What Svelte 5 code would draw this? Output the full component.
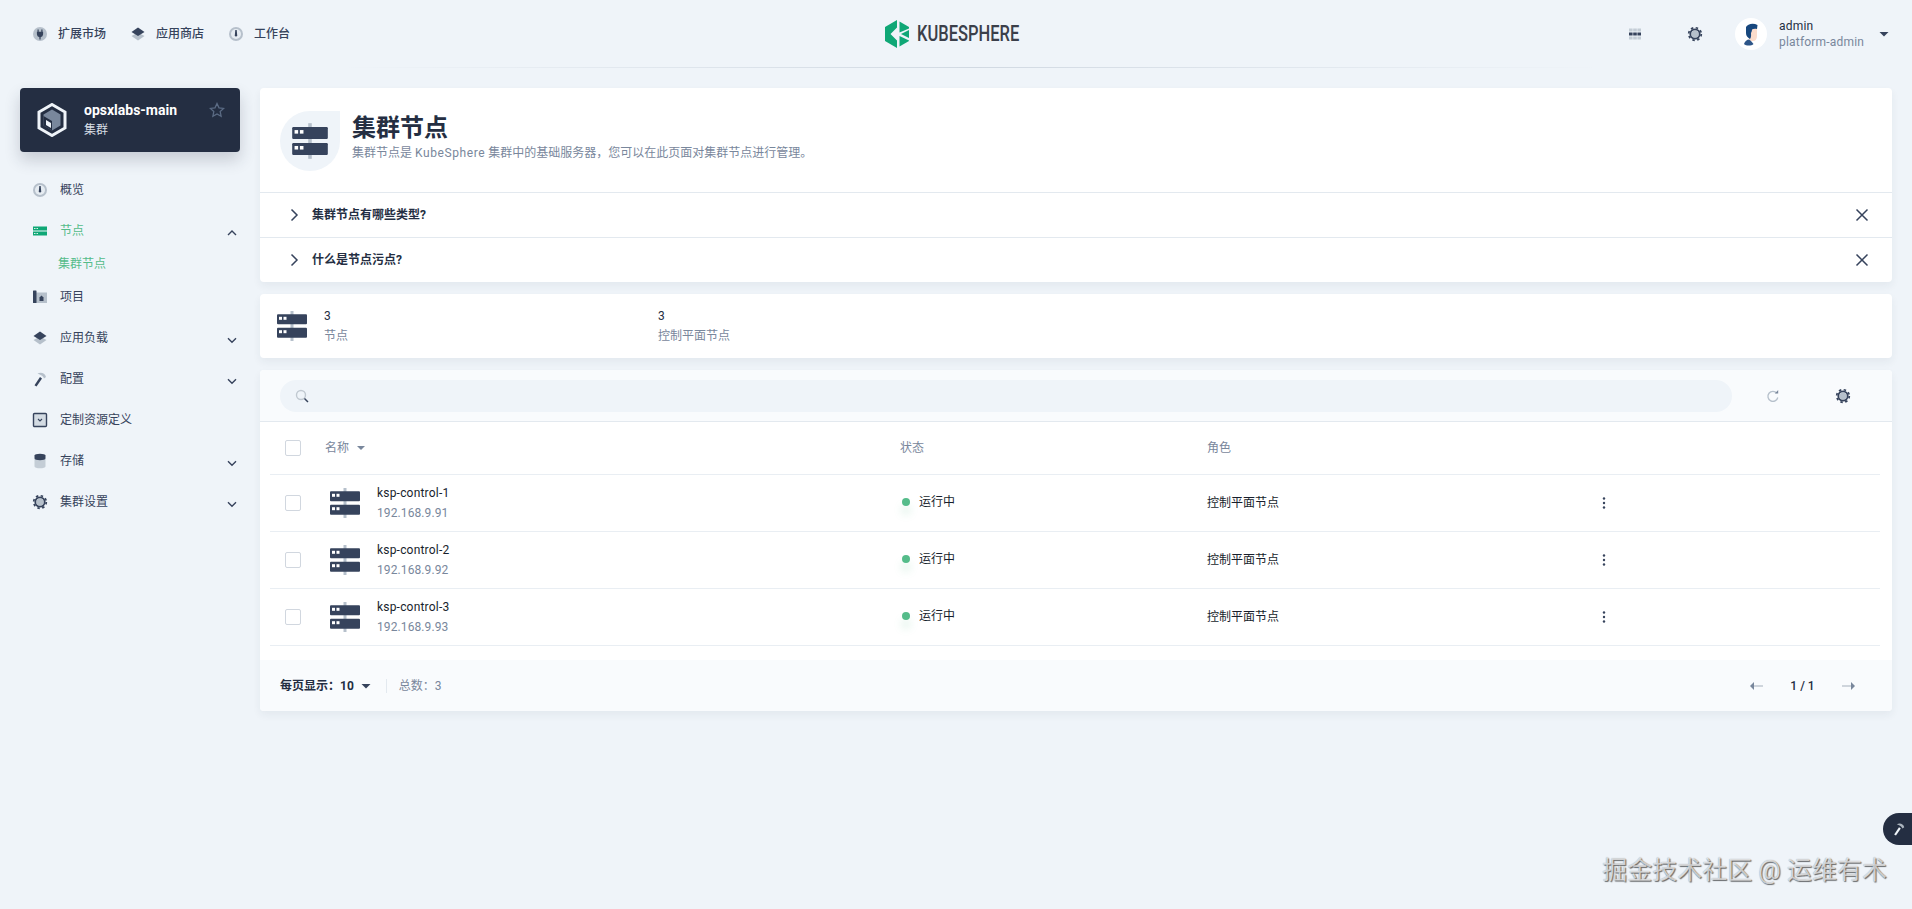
<script>
  const topLinks = [
    { icon: 'plug', label: '扩展市场' },
    { icon: 'layers', label: '应用商店' },
    { icon: 'gauge', label: '工作台' }
  ];

  const navItems = [
    { icon: 'gauge', label: '概览' },
    { icon: 'server', label: '节点', open: true, active: true, children: ['集群节点'] },
    { icon: 'project', label: '项目' },
    { icon: 'layers', label: '应用负载', closed: true },
    { icon: 'hammer', label: '配置', closed: true },
    { icon: 'crd', label: '定制资源定义' },
    { icon: 'storage', label: '存储', closed: true },
    { icon: 'gear', label: '集群设置', closed: true }
  ];

  const tips = ['集群节点有哪些类型?', '什么是节点污点?'];

  const nodes = [
    { name: 'ksp-control-1', ip: '192.168.9.91' },
    { name: 'ksp-control-2', ip: '192.168.9.92' },
    { name: 'ksp-control-3', ip: '192.168.9.93' }
  ];
</script>

{#snippet serverIcon(cls, dark = '#36435c', light = '#b6c0cb', dot = '#fff')}
  <svg class={cls} viewBox="0 0 32 32">
    <rect x="14.5" y="1" width="3" height="30" fill={light} />
    <rect x="1" y="4.3" width="30" height="10" rx="1" fill={dark} />
    <rect x="1" y="17.7" width="30" height="10" rx="1" fill={dark} />
    <rect x="3" y="6.8" width="3" height="3" fill={dot} />
    <rect x="7.5" y="6.8" width="3" height="3" fill={dot} />
    <rect x="3" y="20.2" width="3" height="3" fill={dot} />
    <rect x="7.5" y="20.2" width="3" height="3" fill={dot} />
  </svg>
{/snippet}

{#snippet icon(name)}
  <svg class="ico" viewBox="0 0 16 16">
    {#if name === 'gauge'}
      <circle cx="8" cy="8" r="7" fill="#b6c0cb" />
      <circle cx="8" cy="8" r="5" fill="#e6ecf2" />
      <path d="M7.3 4h1.4l.5 5.2a1.2 1.2 0 1 1-2.4 0z" fill="#36435c" />
    {:else if name === 'plug'}
      <circle cx="8" cy="8" r="7" fill="#b6c0cb" />
      <path d="M5.5 3.5h1.2v2.2h2.6V3.5h1.2v2.2h.6v2.6a3 3 0 0 1-2.5 2.9v2.3H7.4v-2.3a3 3 0 0 1-2.5-2.9V5.700h.6z" fill="#36435c" />
    {:else if name === 'layers'}
      <path d="M1.500 10l6.500-3.500 6.500 3.500-6.500 4.500z" fill="#b6c0cb" />
      <path d="M1.500 6l6.500-4.500 6.500 4.500-6.500 4z" fill="#36435c" />
    {:else if name === 'project'}
      <rect x="3" y="3.500" width="12" height="10.500" fill="#b6c0cb" />
      <rect x="1" y="1.500" width="3.500" height="12.500" rx=".5" fill="#36435c" />
      <path d="M7.500 12V8.500l2-2 2 2V12z" fill="#36435c" />
    {:else if name === 'hammer'}
      <path d="M8 6l2 1.500-5.500 8-2-1.200z" fill="#36435c" />
      <path d="M5.500 2.500c3.500-1.500 7.500-.500 8.500 3.500l-2 1.500c-.500-2-2.500-3.500-6.500-5z" fill="#b6c0cb" />
    {:else if name === 'crd'}
      <rect x="1.500" y="1.500" width="13" height="13" rx="1" fill="#d3dbe3" stroke="#36435c" stroke-width="1.400" />
      <path d="M6 7l2 2 2-2" fill="none" stroke="#36435c" stroke-width="1.100" />
    {:else if name === 'storage'}
      <path d="M2.500 6h11v7.500c0 1-2.500 1.800-5.500 1.800s-5.500-.8-5.500-1.800z" fill="#c4cdd6" />
      <path d="M2.500 2.500C2.500 1.500 5 .8 8 .8s5.500.7 5.500 1.700v3C13.500 6.500 11 7.200 8 7.200S2.500 6.500 2.500 5.500z" fill="#36435c" />
    {:else if name === 'gear'}
      <circle cx="8" cy="8" r="3.600" fill="#b6c0cb" />
      <circle cx="8" cy="8" r="4.700" fill="none" stroke="#36435c" stroke-width="1.800" />
      <circle cx="8" cy="8" r="6.300" fill="none" stroke="#36435c" stroke-width="1.700" stroke-dasharray="2.470 2.470" />
    {:else if name === 'grid'}
      <g fill="#c4cdd6">
        <rect x="2" y="2.500" width="3.600" height="3" /><rect x="6.200" y="2.500" width="3.600" height="3" /><rect x="10.400" y="2.500" width="3.600" height="3" />
        <rect x="2" y="10.500" width="3.600" height="3" /><rect x="6.200" y="10.500" width="3.600" height="3" /><rect x="10.400" y="10.500" width="3.600" height="3" />
      </g>
      <g fill="#36435c">
        <rect x="2" y="6.500" width="3.600" height="3" /><rect x="6.200" y="6.500" width="3.600" height="3" /><rect x="10.400" y="6.500" width="3.600" height="3" />
      </g>
    {:else if name === 'search'}
      <circle cx="7" cy="7" r="4.500" fill="none" stroke="#c1c9d1" stroke-width="1.400" />
      <path d="M10.500 10.500l3.500 3.500" stroke="#36435c" stroke-width="1.500" />
    {:else if name === 'refresh'}
      <path d="M11.800 5.200A5 5 0 1 0 12.800 9.500" fill="none" stroke="#b6c0cb" stroke-width="1.300" />
      <path d="M9.800 5.400h3.400V2z" fill="#79879c" />
    {:else if name === 'down'}
      <path d="M4 6.200l4 4 4-4" fill="none" stroke="#36435c" stroke-width="1.400" />
    {:else if name === 'up'}
      <path d="M4 10l4-4 4 4" fill="none" stroke="#36435c" stroke-width="1.400" />
    {:else if name === 'right'}
      <path d="M5.500 2.500l5.500 5.500-5.500 5.500" fill="none" stroke="#36435c" stroke-width="1.500" />
    {:else if name === 'close'}
      <path d="M2.500 2.500l11 11M13.500 2.500l-11 11" fill="none" stroke="#36435c" stroke-width="1.500" />
    {:else if name === 'caret'}
      <path d="M3.500 6h9L8 10.500z" fill="#36435c" />
    {:else if name === 'caretGray'}
      <path d="M4 6h8L8 10z" fill="#79879c" />
    {:else if name === 'dots'}
      <g fill="#36435c"><circle cx="8" cy="3.500" r="1.200" /><circle cx="8" cy="8" r="1.200" /><circle cx="8" cy="12.500" r="1.200" /></g>
    {:else if name === 'left'}
      <path d="M5 8h10" stroke="#c1c9d1" stroke-width="1.500" />
      <path d="M6 4L2 8l4 4z" fill="#79879c" />
    {:else if name === 'next'}
      <path d="M1 8h10" stroke="#c1c9d1" stroke-width="1.500" />
      <path d="M10 4l4 4-4 4z" fill="#79879c" />
    {/if}
  </svg>
{/snippet}

<div class="page">
  <header class="topbar">
    <div class="top-links">
      {#each topLinks as link}
        <a class="top-link" href="#top">{@render icon(link.icon)}<span>{link.label}</span></a>
      {/each}
    </div>

    <div class="logo">
      <svg class="logo-mark" viewBox="0 0 24 28">
        <g fill="#0fa776">
          <path d="M0 7L12 0v7.500L5.500 14l6.500 6.500V28L0 21z" />
          <path d="M14.500 1.500L24 7v1.500l-9.500 4z" />
          <path d="M24 10v8l-8-4z" />
          <path d="M14.500 16l9.500 4.500V21l-9.500 5.500z" />
        </g>
      </svg>
      <span class="logo-text">KUBESPHERE</span>
    </div>

    <div class="top-right">
      {@render icon('grid')}
      {@render icon('gear')}
      <div class="avatar">
        <svg viewBox="0 0 32 32" width="32" height="32">
          <path d="M14 10h8v8c0 3-1.500 5-4 5h-4z" fill="#fbdccb" />
          <path d="M9 26c1-3 3-4.500 5-4.500l2 1.500 2.500 3c-2 2-7.500 2-9.500 0z" fill="#2d5588" />
          <path d="M11 9c1.500-3 7-4.500 11.500-2l-.5 4c-2.500-.5-4 0-5 .5 0 1.500-.5 2.500-1 3.500 0 2 .5 4-1 6-2.500-1.500-4-3-4-6 0-2 0-4 0-6z" fill="#17477d" />
        </svg>
      </div>
      <div class="user">
        <div class="user-name">admin</div>
        <div class="user-role">platform-admin</div>
      </div>
      {@render icon('caret')}
    </div>
    <div class="top-line"></div>
  </header>

  <div class="body">
    <aside class="sidebar">
      <div class="cluster">
        <svg class="cluster-logo" viewBox="0 0 30 34">
          <path d="M15 1.500L28 9v16l-13 7.500L2 25V9z" fill="#242e42" stroke="#eff4f9" stroke-width="3" />
          <path d="M15 6.500L23.500 11.500v11L15 27.500 6.500 22.500v-11z" fill="#79879c" />
          <path d="M6.500 13l8.500 5v9.500l-8.500-5z" fill="#242e42" />
          <path d="M9 17l5 3v5l-5-3z" fill="#eff4f9" />
        </svg>
        <div class="cluster-text">
          <div class="cluster-name">opsxlabs-main</div>
          <div class="cluster-kind">集群</div>
        </div>
        <svg class="star" viewBox="0 0 16 16">
          <path d="M8 1.500l2 4.300 4.700.6-3.500 3.200.9 4.700L8 12l-4.100 2.300.9-4.700L1.300 6.400 6 5.800z" fill="none" stroke="#5b6b84" stroke-width="1.300" />
        </svg>
      </div>

      <nav class="nav">
        {#each navItems as item}
          <div class="nav-item" class:active={item.active}>
            {#if item.active}
              <svg class="ico" viewBox="0 0 16 16">
                <path d="M1 3.500h14v4H1zM1 8.500h14v4H1z" fill="#0fa776" />
                <path d="M2 5h1.500v1H2zM4.500 5H6v1H4.500zM2 10h1.500v1H2zM4.500 10H6v1H4.500z" fill="#d8f0e6" />
              </svg>
            {:else}
              {@render icon(item.icon)}
            {/if}
            <span class="nav-label">{item.label}</span>
            {#if item.open}
              <span class="nav-chevron">{@render icon('up')}</span>
            {:else if item.closed}
              <span class="nav-chevron">{@render icon('down')}</span>
            {/if}
          </div>
          {#each item.children ?? [] as child}
            <div class="nav-child">{child}</div>
          {/each}
        {/each}
      </nav>
    </aside>

    <main class="main">
      <section class="card">
        <div class="hero">
          <div class="hero-icon">{@render serverIcon('hero-server')}</div>
          <div class="hero-text">
            <h1>集群节点</h1>
            <p>集群节点是 <span class="latin">KubeSphere</span> 集群中的基础服务器&#xFF0C;您可以在此页面对集群节点进行管理。</p>
          </div>
        </div>
        {#each tips as tip}
          <div class="tip">
            {@render icon('right')}
            <span class="tip-text">{tip}</span>
            {@render icon('close')}
          </div>
        {/each}
      </section>

      <section class="card stats">
        {@render serverIcon('server')}
        <div class="stat">
          <div class="stat-value">3</div>
          <div class="stat-label">节点</div>
        </div>
        <div class="stat">
          <div class="stat-value">3</div>
          <div class="stat-label">控制平面节点</div>
        </div>
      </section>

      <section class="card table-card">
        <div class="toolbar">
          <div class="search">{@render icon('search')}</div>
          <div class="tools">
            {@render icon('refresh')}
            {@render icon('gear')}
          </div>
        </div>

        <div class="table">
          <div class="tr thead">
            <span class="checkbox"></span>
            <span class="th-name">名称 {@render icon('caretGray')}</span>
            <span>状态</span>
            <span>角色</span>
            <span></span>
          </div>
          {#each nodes as node}
            <div class="tr">
              <span class="checkbox"></span>
              <div class="node">
                {@render serverIcon('server')}
                <div>
                  <div class="node-name">{node.name}</div>
                  <div class="node-ip">{node.ip}</div>
                </div>
              </div>
              <div class="status"><i class="dot"></i>运行中</div>
              <div class="role">控制平面节点</div>
              <div class="more">{@render icon('dots')}</div>
            </div>
          {/each}
        </div>

        <div class="footer">
          <span class="page-size">每页显示&#xFF1A;10</span>
          {@render icon('caret')}
          <span class="sep"></span>
          <span class="total">总数&#xFF1A;3</span>
          <div class="pager">
            {@render icon('left')}
            <span class="page-num">1 / 1</span>
            {@render icon('next')}
          </div>
        </div>
      </section>
    </main>
  </div>

  <div class="tool-tab">
    <svg viewBox="0 0 16 16" width="14" height="14">
      <path d="M8 6l2 1.500-5.500 8-2-1.200z" fill="#eff4f9" />
      <path d="M5.500 2.500c3.500-1.500 7.500-.500 8.500 3.500l-2 1.500c-.500-2-2.500-3.500-6.500-5z" fill="#abb4be" />
    </svg>
  </div>
  <div class="watermark">掘金技术社区 @ 运维有术</div>
</div>

<style>
  :global(body) {
    margin: 0;
    background: #eff4f9;
    color: #242e42;
    font-family: Roboto, 'Noto Sans CJK SC', sans-serif;
    font-size: 12px;
    line-height: 20px;
    overflow: hidden;
  }

  .page {
    position: relative;
    height: 909px;
    overflow: hidden;
  }

  .ico {
    width: 16px;
    height: 16px;
    flex: none;
    display: block;
  }

  /* top bar */
  .topbar {
    position: relative;
    height: 68px;
    display: grid;
    grid-template-columns: 1fr auto 1fr;
    align-items: center;
  }

  .top-line {
    position: absolute;
    left: 340px;
    right: 310px;
    bottom: 0;
    height: 1px;
    background: linear-gradient(90deg, rgba(201, 209, 219, 0), #d1d9e2 50%, rgba(201, 209, 219, 0));
  }

  .top-links {
    display: flex;
    gap: 24px;
    padding-left: 32px;
  }

  .top-link {
    display: flex;
    align-items: center;
    gap: 10px;
    color: #36435c;
    font-weight: 500;
    text-decoration: none;
  }

  .logo {
    display: flex;
    align-items: center;
    gap: 8px;
    width: 135px;
    margin-right: 7px;
  }

  .logo-mark {
    width: 24px;
    height: 28px;
    flex: none;
  }

  .logo-text {
    font-size: 22px;
    line-height: 28px;
    color: #3b3f4a;
    font-weight: 500;
    transform: scaleX(0.75);
    transform-origin: left center;
    white-space: nowrap;
  }

  .top-right {
    display: flex;
    align-items: center;
    justify-content: flex-end;
    padding-right: 20px;
    gap: 44px;
  }

  .avatar {
    width: 32px;
    height: 32px;
    border-radius: 50%;
    background: #fff;
    margin-left: -12px;
    margin-right: -32px;
  }

  .user {
    width: 97px;
    margin-right: -44px;
    line-height: 16px;
    letter-spacing: 0.2px;
  }

  .user-role {
    color: #79879c;
  }

  /* layout */
  .body {
    display: flex;
    padding-top: 20px;
  }

  .sidebar {
    width: 220px;
    margin: 0 20px;
    flex: none;
  }

  .cluster {
    height: 64px;
    box-sizing: border-box;
    display: flex;
    align-items: center;
    padding-left: 17px;
    background: #242e42;
    border-radius: 4px;
    box-shadow: 0 8px 16px rgba(36, 46, 66, 0.2);
    color: #fff;
  }

  .cluster-logo {
    width: 30px;
    height: 34px;
    flex: none;
  }

  .cluster-text {
    margin-left: 17px;
    flex: 1;
  }

  .cluster-name {
    font-size: 14px;
    font-weight: 700;
  }

  .cluster-kind {
    color: #d8dee5;
  }

  .star {
    width: 16px;
    height: 16px;
    margin: -20px 15px 0 0;
  }

  .nav {
    margin-top: 17px;
  }

  .nav-item {
    height: 41px;
    display: flex;
    align-items: center;
    gap: 12px;
    padding-left: 12px;
    color: #36435c;
  }

  .nav-item.active {
    color: #55bc8a;
  }

  .nav-label {
    flex: 1;
  }

  .nav-chevron {
    padding-top: 4px;
  }

  .nav-child {
    height: 25px;
    line-height: 26px;
    padding-left: 38px;
    color: #55bc8a;
  }

  .main {
    flex: 1;
    min-width: 0;
    margin-right: 20px;
    display: flex;
    flex-direction: column;
    gap: 12px;
  }

  .card {
    background: #fff;
    border-radius: 4px;
    box-shadow: 0 4px 8px rgba(36, 46, 66, 0.06);
  }

  /* page heading */
  .hero {
    height: 104px;
    box-sizing: border-box;
    display: flex;
    gap: 12px;
    padding: 23px 0 0 20px;
  }

  .hero-icon {
    width: 60px;
    height: 60px;
    display: flex;
    align-items: center;
    justify-content: center;
    background: #eff4f9;
    border-radius: 50% 0 50% 50%;
  }

  .hero-text h1 {
    margin: 1px 0 0;
    font-size: 24px;
    line-height: 32px;
    font-weight: 700;
  }

  .hero-text p {
    margin: -1px 0 0;
    color: #79879c;
  }

  .latin {
    letter-spacing: 0.6px;
  }

  .tip {
    height: 45px;
    box-sizing: border-box;
    border-top: 1px solid #e3e9ef;
    display: flex;
    align-items: center;
    gap: 10px;
    padding: 0 22px 0 26px;
  }

  .tip-text {
    flex: 1;
    font-weight: 700;
  }

  /* stats */
  .stats {
    height: 64px;
    box-sizing: border-box;
    display: flex;
    align-items: center;
    gap: 16px;
    padding-left: 16px;
  }

  .stat {
    width: 318px;
  }

  .stat-label {
    color: #79879c;
  }

  /* table */
  .toolbar {
    height: 52px;
    box-sizing: border-box;
    display: flex;
    align-items: center;
    padding: 0 41px 0 20px;
    background: #f9fbfd;
    border-bottom: 1px solid #e3e9ef;
    border-radius: 4px 4px 0 0;
  }

  .search {
    flex: 1;
    height: 32px;
    display: flex;
    align-items: center;
    padding-left: 14px;
    background: #eff4f9;
    border-radius: 16px;
  }

  .tools {
    display: flex;
    gap: 54px;
    margin-left: 33px;
  }

  .table {
    padding: 0 12px 14px 10px;
  }

  .tr {
    height: 57px;
    box-sizing: border-box;
    display: grid;
    grid-template-columns: 55px 575px 307px 389px 1fr;
    align-items: center;
    border-bottom: 1px solid #e9eef3;
  }

  .thead {
    height: 53px;
    color: #79879c;
  }

  .th-name {
    display: flex;
    align-items: center;
    gap: 4px;
  }

  .checkbox {
    width: 16px;
    height: 16px;
    box-sizing: border-box;
    margin-left: 15px;
    background: #fff;
    border: 1px solid #d1d7df;
    border-radius: 2px;
  }

  .node {
    display: flex;
    align-items: center;
    gap: 16px;
    padding-left: 4px;
  }

  :global(.server) {
    width: 32px;
    height: 32px;
    flex: none;
    display: block;
  }

  :global(.hero-server) {
    width: 38px;
    height: 38px;
    display: block;
  }

  .node-name {
    letter-spacing: 0.2px;
    color: #171e2c;
  }

  .node-ip {
    color: #79879c;
    letter-spacing: 0.1px;
  }

  .status {
    display: flex;
    align-items: center;
    padding: 0 0 2px 2px;
    gap: 9px;
    color: #171e2c;
  }

  .dot {
    width: 8px;
    height: 8px;
    border-radius: 50%;
    background: #55bc8a;
    box-shadow: 0 8px 8px rgba(85, 188, 138, 0.22);
  }

  .role {
    color: #171e2c;
  }

  .footer {
    height: 51px;
    box-sizing: border-box;
    display: flex;
    align-items: center;
    padding: 0 35px 0 20px;
    background: #f9fbfd;
    border-radius: 0 0 4px 4px;
  }

  .page-size {
    font-weight: 700;
    margin-right: 4px;
  }

  .sep {
    width: 1px;
    height: 14px;
    margin: 0 12px;
    background: #e3e9ef;
  }

  .total {
    color: #79879c;
  }

  .pager {
    margin-left: auto;
    display: flex;
    align-items: center;
  }

  .page-num {
    width: 77px;
    text-align: center;
    font-weight: 500;
  }

  /* floating bits */
  .tool-tab {
    position: absolute;
    left: 1883px;
    top: 813px;
    width: 40px;
    height: 32px;
    display: flex;
    align-items: center;
    padding-left: 9px;
    box-sizing: border-box;
    background: #242e42;
    border-radius: 16px 0 0 16px;
  }

  .watermark {
    position: absolute;
    right: 25px;
    bottom: 23px;
    font-size: 25px;
    line-height: 30px;
    color: rgba(255, 255, 255, 0.7);
    text-shadow: 1px 1px 1px rgba(0, 0, 0, 0.55), 0 0 1px rgba(0, 0, 0, 0.4);
    white-space: nowrap;
  }
</style>
